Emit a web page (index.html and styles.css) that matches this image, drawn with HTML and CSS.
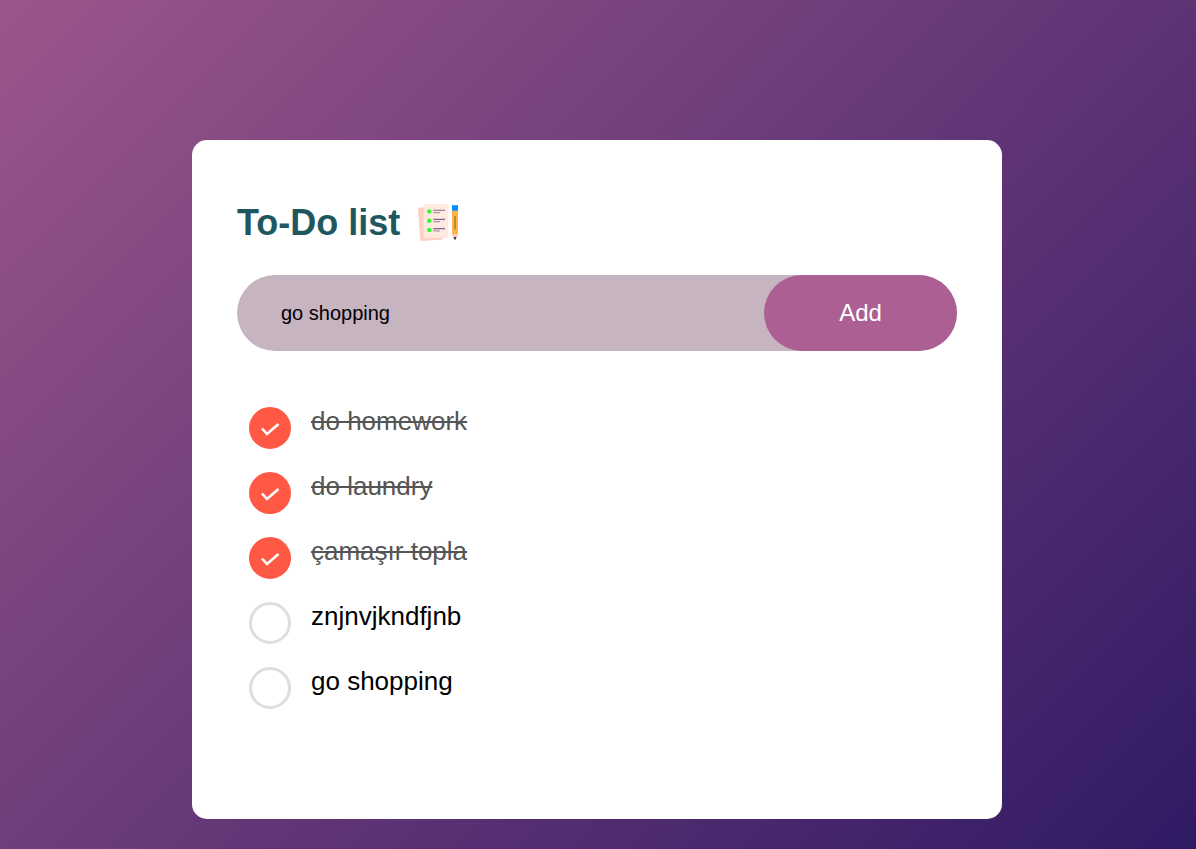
FILE: index.html
```html
<!DOCTYPE html>
<html lang="en">
<head>
<meta charset="utf-8">
<meta name="viewport" content="width=device-width, initial-scale=1">
<title>To-Do list</title>
<link rel="stylesheet" href="styles.css">
</head>
<body>
<main class="card">
  <h1 class="title">To-Do list
    <svg class="title-icon" viewBox="-1 -2 45 45" aria-hidden="true">
      <path d="M4 5.500 26 4.500 28 37.500 6.500 39Q5.500 39 5.300 38L3 7Q3 5.700 4 5.500Z" fill="#ffcfc2"/>
      <rect x="8.500" y="2" width="25" height="34" rx="2" fill="#ffeadf"/>
      <circle cx="14.300" cy="9.400" r="2.200" fill="#35fa2e"/>
      <circle cx="14.300" cy="18.700" r="2.200" fill="#35fa2e"/>
      <circle cx="14.300" cy="27.900" r="2.200" fill="#35fa2e"/>
      <path d="M18.300 8.300H30M18.300 17.400H30M18.300 26.600H30" stroke="#7d6792" stroke-width="1.100"/>
      <path d="M18.300 10.600H25M18.300 19.700H25M18.300 28.900H25" stroke="#ad95aa" stroke-width="1.200"/>
      <path d="M37 7H43V32H37Z" fill="#ffb545"/>
      <path d="M37 3.200H43V8.700H37Z" fill="#078dff"/>
      <path d="M40 14V27.500" stroke="#a47639" stroke-width="1.400"/>
      <path d="M37 32H43L41.400 36H38.600Z" fill="#f9c5bd"/>
      <path d="M38.500 35H41.500L40.300 38H39.700Z" fill="#403642"/>
    </svg>
  </h1>
  <form class="entry">
    <input class="entry-text" type="text" value="go shopping" aria-label="New task">
    <button class="entry-add" type="button">Add</button>
  </form>
  <ul class="tasks">
    <li><label class="task"><input class="task-box" type="checkbox" checked><svg class="task-check" viewBox="0 0 42 42" aria-hidden="true"><path d="M13 21.500 18 27 29.500 17"/></svg><span class="task-text">do homework</span></label></li>
    <li><label class="task"><input class="task-box" type="checkbox" checked><svg class="task-check" viewBox="0 0 42 42" aria-hidden="true"><path d="M13 21.500 18 27 29.500 17"/></svg><span class="task-text">do laundry</span></label></li>
    <li><label class="task"><input class="task-box" type="checkbox" checked><svg class="task-check" viewBox="0 0 42 42" aria-hidden="true"><path d="M13 21.500 18 27 29.500 17"/></svg><span class="task-text" lang="tr">çamaşır topla</span></label></li>
    <li><label class="task"><input class="task-box" type="checkbox"><svg class="task-check" viewBox="0 0 42 42" aria-hidden="true"><path d="M13 21.500 18 27 29.500 17"/></svg><span class="task-text">znjnvjkndfjnb</span></label></li>
    <li><label class="task"><input class="task-box" type="checkbox"><svg class="task-check" viewBox="0 0 42 42" aria-hidden="true"><path d="M13 21.500 18 27 29.500 17"/></svg><span class="task-text">go shopping</span></label></li>
  </ul>
</main>
</body>
</html>
```
FILE: styles.css
```css
* {
  box-sizing: border-box;
  margin: 0;
  padding: 0;
  font-family: "Liberation Sans", Arial, sans-serif;
}

body {
  min-height: 100vh;
  padding: 140px 12px 30px 10px;
  background: linear-gradient(135deg, #9b568b, #301a64);
}

.card {
  width: 100%;
  max-width: 810px;
  margin: 0 auto;
  padding: 60px 45px 110px;
  border-radius: 15px;
  background: #fff;
}

.title {
  display: flex;
  align-items: center;
  gap: 14px;
  font-size: 36px;
  line-height: 45px;
  color: #1f5761;
}

.title-icon {
  width: 45px;
  height: 45px;
}

.entry {
  display: flex;
  height: 76px;
  margin-top: 30px;
  border-radius: 38px;
  background: #c6b4c0;
}

.entry-text {
  flex: 1;
  min-width: 0;
  padding: 0 44px;
  border: 0;
  outline: 0;
  background: transparent;
  font-size: 20px;
  color: #000;
}

.entry-add {
  width: 193px;
  border: 0;
  border-radius: 38px;
  background: #ab5f93;
  font-size: 24px;
  color: #fff;
  cursor: pointer;
}

.tasks {
  display: grid;
  gap: 23px;
  margin-top: 56px;
  padding: 0 12px;
  list-style: none;
}

.task {
  display: grid;
  grid-template-columns: 42px 1fr;
  column-gap: 20px;
  cursor: pointer;
}

.task-box,
.task-check {
  grid-area: 1 / 1;
  width: 42px;
  height: 42px;
}

.task-box {
  appearance: none;
  border: 3px solid #dedede;
  border-radius: 50%;
  background: #fff;
}

.task-check {
  visibility: hidden;
  fill: none;
  stroke: #fff;
  stroke-width: 2.6;
}

.task-text {
  grid-area: 1 / 2;
  font-size: 26px;
  line-height: 28px;
  color: #000;
}

.task-box:checked {
  border-color: #ff5945;
  background: #ff5945;
}

.task-box:checked + .task-check {
  visibility: visible;
}

.task-box:checked ~ .task-text {
  color: #555;
  text-decoration: line-through;
}
```
